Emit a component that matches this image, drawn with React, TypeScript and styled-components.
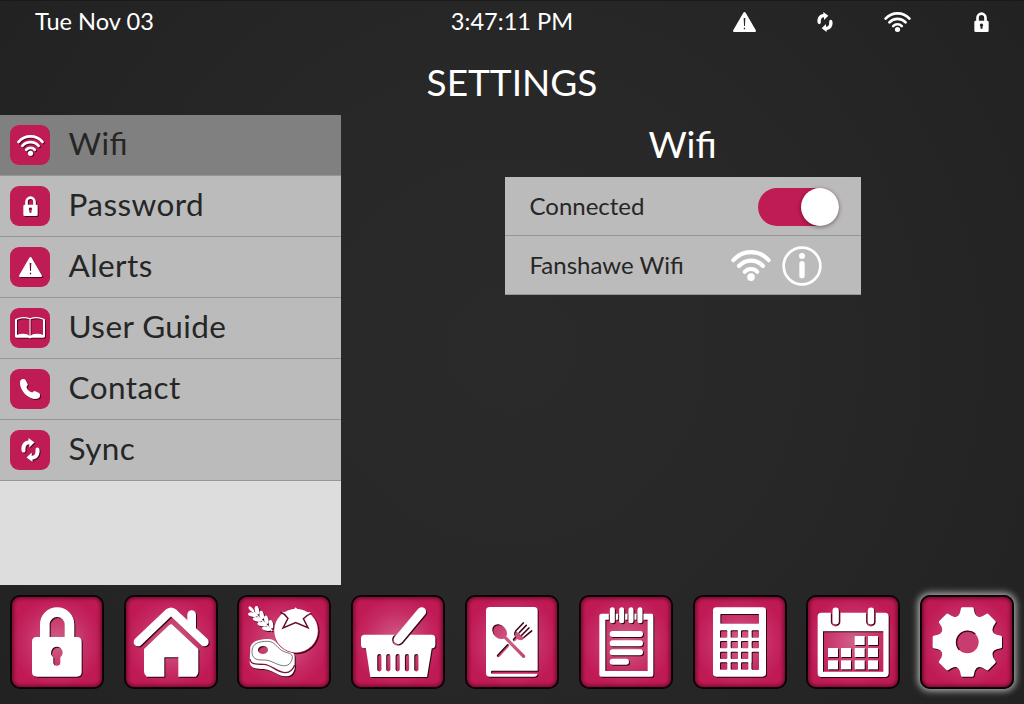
import React, { ReactNode } from "react";
import styled, { createGlobalStyle, css } from "styled-components";

const PINK = "#bf1b55";
const INK = "#262626";

const GlobalStyle = createGlobalStyle`
  * { box-sizing: border-box; }
  body {
    margin: 0;
    font-family: Lato, "Liberation Sans", sans-serif;
    background: #242424;
    overflow: hidden;
  }
`;

const Screen = styled.div`
  width: 1024px;
  height: 704px;
  display: flex;
  flex-direction: column;
  color: #fff;
  border-top: 1px solid #1a1a1a;
  background: radial-gradient(circle at 512px 350px, #2a2a2a 0, #282828 260px, #222 620px);
`;

const StatusBar = styled.header`
  height: 42px;
  flex: none;
  padding: 0 35px;
  display: grid;
  grid-template-columns: 1fr auto 1fr;
  align-items: center;
  font-size: 23.6px;
  line-height: 40px;
`;

const StatusText = styled.span`
  height: 42px;
`;

const StatusIcons = styled.div`
  justify-self: end;
  display: flex;
  align-items: center;
`;

const StatusIcon = styled.span<{ $gap: number }>`
  display: flex;
  margin-left: ${(p) => p.$gap}px;
`;

const PageTitle = styled.h1`
  height: 72px;
  flex: none;
  margin: 0;
  font-size: 37px;
  font-weight: 400;
  line-height: 78px;
  text-align: center;
`;

const Main = styled.main`
  display: flex;
  height: 470px;
  flex: none;
`;

const Sidebar = styled.aside`
  width: 341px;
  background: #ddd;
`;

const MenuRow = styled.div<{ $active?: boolean }>`
  height: 61px;
  padding-left: 10px;
  display: flex;
  align-items: center;
  gap: 18.5px;
  color: ${INK};
  background: ${(p) => (p.$active ? "#808080" : "#bbb")};
  border-bottom: 1px solid #969696;
`;

const MenuIcon = styled.span`
  width: 40px;
  height: 40px;
  display: flex;
  align-items: center;
  justify-content: center;
  border-radius: 9px;
  background: ${PINK};
  svg { filter: drop-shadow(1px 1px 0.3px rgba(50, 0, 20, 0.75)); }
`;

const MenuLabel = styled.span`
  font-size: 31.5px;
  letter-spacing: 0.42px;
  font-feature-settings: "liga" 1;
  line-height: 40px;
  padding-bottom: 4px;
`;

const Content = styled.section`
  flex: 1;
  display: flex;
  flex-direction: column;
  align-items: center;
`;

const PanelTitle = styled.h2`
  margin: 0;
  height: 62px;
  font-size: 37px;
  font-weight: 400;
  line-height: 58px;
`;

const Card = styled.div`
  width: 356px;
  color: ${INK};
  background: #bbb;
`;

const CardRow = styled.div<{ $end: number }>`
  height: 59px;
  padding: 0 ${(p) => p.$end}px 0 25px;
  display: flex;
  align-items: center;
  justify-content: space-between;
  font-size: 24px;
  border-bottom: 1px solid #969696;
`;

const CardLabel = styled.span`
  padding-bottom: 2px;
`;

const NetworkIcons = styled.span`
  display: flex;
  align-items: center;
  gap: 11px;
  padding-top: 1px;
`;

const Toggle = styled.span`
  width: 81px;
  height: 38px;
  margin-top: 2px;
  display: flex;
  justify-content: flex-end;
  border-radius: 19px;
  background: ${PINK};
`;

const Knob = styled.span`
  width: 38px;
  height: 38px;
  border-radius: 50%;
  background: #fff;
  box-shadow: 0 1px 4px rgba(0, 0, 0, 0.45);
`;

const Dock = styled.nav`
  flex: 1;
  padding-top: 10px;
  display: grid;
  grid-template-columns: repeat(9, 1fr);
  justify-items: center;
  align-items: start;
`;

const DockButton = styled.span<{ $active?: boolean }>`
  width: 94px;
  height: 94px;
  display: block;
  border-radius: 10px;
  border: 2px solid #0c0206;
  background: radial-gradient(circle at 50% 50%, #d0608a 0, #ca3e70 32%, #c52a63 50%, #c01a55 72%);
  box-shadow: inset 0 0 4px 1px rgba(60, 0, 20, 0.75)
    ${(p) => p.$active && css`, 0 0 7px 2px rgba(225, 225, 225, 0.75)`};
  svg {
    display: block;
    margin: -2px;
    filter: drop-shadow(1.6px 1.7px 0.6px rgba(30, 0, 10, 0.9));
  }
`;

type Size = { w: number; h: number };

const WifiGlyph = ({ w, h }: Size) => (
  <svg width={w} height={h} viewBox="0 0 120 91" preserveAspectRatio="none">
    <g fill="none" stroke="#fff" strokeWidth="12" strokeLinecap="round">
      <path d="M7 30A71 71 0 0 1 113 30" />
      <path d="M24 47A49 49 0 0 1 96 47" />
      <path d="M41 64A26 26 0 0 1 79 64" />
    </g>
    <circle cx="60" cy="79.500" r="11.500" fill="#fff" />
  </svg>
);

const LockGlyph = ({ w, h }: Size) => (
  <svg width={w} height={h} viewBox="0 0 43 60">
    <path d="M9.5 30V17a12 12 0 0 1 24 0V30" fill="none" stroke="#fff" strokeWidth="8" />
    <path
      fill="#fff"
      fillRule="evenodd"
      d="M4 26H39Q43 26 43 30V56Q43 60 39 60H4Q0 60 0 56V30Q0 26 4 26ZM21.500 34.500a5 5 0 0 0-3 9V50h6V43.500a5 5 0 0 0-3-9Z"
    />
  </svg>
);

const AlertGlyph = ({ w, h }: Size) => (
  <svg width={w} height={h} viewBox="0 0 69 60">
    <path
      fill="#fff"
      fillRule="evenodd"
      d="M31 2Q34.500-2 38 2L68 54Q71 60 65 60H4Q-2 60 1 54ZM32 18L33.200 42H35.800L37 18ZM32.500 47V51.500H36.500V47Z"
    />
  </svg>
);

const SyncHalf = () => (
  <path d="M.5 31C-1 17 6 7 18 6V0L33 11.500L20 24V15.500C13 15.500 9.500 21 10.500 31Q10.500 36.500 6 36.500Q1 36.500 .5 31Z" />
);

const SyncGlyph = ({ w, h }: Size) => (
  <svg width={w} height={h} viewBox="0 0 46 60">
    <g fill="#fff">
      <SyncHalf />
      <g transform="rotate(180 23 30)">
        <SyncHalf />
      </g>
    </g>
  </svg>
);

const BookGlyph = () => (
  <svg width="30" height="22" viewBox="0 0 90 66">
    <path
      fill="#fff"
      fillRule="evenodd"
      d="M3 5Q25-4 45 4Q65-4 87 5Q90 6 90 9V58Q90 62 86 62H50Q45 65 40 62H4Q0 62 0 58V9Q0 6 3 5ZM6 8V54Q12 50 25 50Q38 50 43.500 56V7Q27 0 6 8ZM46.500 7V56Q52 50 65 50Q78 50 84 54V8Q63 0 46.500 7Z"
    />
  </svg>
);

const PhoneGlyph = () => (
  <svg width="20" height="20" viewBox="0 0 60 60">
    <path
      fill="#fff"
      d="M5 1C9-1 14-1 17 4L23 15C25 20 18 22 20 26C23 34 29 38 35 40C39 41 39 36 44 36L56 41C61 43 61 50 59 54C56 60 47 61 39 59C20 54 6 38 1 20C-1 11 0 4 5 1Z"
    />
  </svg>
);

const InfoGlyph = () => (
  <svg width="40" height="40" viewBox="0 0 120 120">
    <circle cx="60" cy="60" r="55" fill="none" stroke="#fff" strokeWidth="8" />
    <circle cx="60" cy="30" r="9" fill="#fff" />
    <path d="M60 53V89" stroke="#fff" strokeWidth="16" strokeLinecap="round" />
  </svg>
);

const DockSvg = ({ children }: { children: ReactNode }) => (
  <svg width="94" height="94" viewBox="0 0 282 282" fill="#fff">
    {children}
  </svg>
);

const DockLock = () => (
  <DockSvg>
    <path d="M104.500 135V88.500a37 37 0 0 1 74 0V135" fill="none" stroke="#fff" strokeWidth="29" />
    <path
      fillRule="evenodd"
      d="M80 126H201Q215 126 215 140V231Q215 245 201 245H80Q66 245 66 231V140Q66 126 80 126ZM141 155a18 18 0 0 0-11 32V202a10.500 10.500 0 0 0 21 0V187a18 18 0 0 0-10-32Z"
    />
  </DockSvg>
);

const DockHouse = () => (
  <DockSvg>
    <path
      d="M42 141L132 55Q141 47 150 55L241 141"
      fill="none"
      stroke="#fff"
      strokeWidth="26"
      strokeLinecap="round"
    />
    <path d="M203 59V102" stroke="#fff" strokeWidth="26" strokeLinecap="round" />
    <path d="M135 91Q141 85 147 91L223 162V230Q223 238 216 245H163V187H121V245H68Q60 238 60 230V162Z" />
  </DockSvg>
);

const GRAINS = [0, 1, 2, 3];

const DockFood = () => (
  <DockSvg>
    <path d="M38 38L106 108" stroke="#fff" strokeWidth="4" />
    {GRAINS.map((i) => (
      <g key={i} transform={`translate(${54 + i * 14} ${53 + i * 14})`}>
        <ellipse cx="6" cy="-7" rx="13" ry="6.500" transform="rotate(78 6 -7)" />
        <ellipse cx="-7" cy="6" rx="14" ry="6.500" transform="rotate(10 -7 6)" />
      </g>
    ))}
    <ellipse cx="43" cy="43" rx="11" ry="5" transform="rotate(45 43 43)" />
    <path
      fillRule="evenodd"
      d="M40 156C45 138 68 132 94 132C116 132 124 152 140 162C154 170 174 167 173 185V222C166 248 145 247 125 239C105 230 96 222 72 222C50 222 38 214 38 200ZM78 153a15 12 0 1 0 .1 0Z"
    />
    <path
      d="M39 192C40 208 55 208 80 208C106 209 118 233 146 233C162 232 168 223 173 210"
      fill="none"
      stroke="#7d1239"
      strokeWidth="4"
    />
    <path
      d="M45 170C45 145 65 139 92 139C113 139 119 157 135 167C150 175 168 173 166 189C162 212 145 216 125 209C106 202 98 194 75 195C57 195 45 190 45 170Z"
      fill="none"
      stroke="#333"
      strokeWidth="2"
    />
    <circle cx="177" cy="107" r="67.500" fill="#c3235c" />
    <circle cx="177" cy="107" r="65.500" />
    <path d="M133 50L162 53L176 37L191 54L222 51L199 72L213 98L176 83L139 99L153 70Z" />
    <path
      d="M130 51Q143 56 153 70L138 99L176 83L213 98L199 71Q207 62 221 56"
      fill="none"
      stroke="#641030"
      strokeWidth="4.500"
    />
  </DockSvg>
);

const DockBasket = () => (
  <DockSvg>
    <mask id="basket-cut">
      <rect width="282" height="282" fill="#fff" />
      <path d="M142 134L212 50" stroke="#000" strokeWidth="37" strokeLinecap="round" />
      {[85, 112, 140, 168, 196].map((x) => (
        <path key={x} d={`M${x} 183V223`} stroke="#000" strokeWidth="12.500" strokeLinecap="round" />
      ))}
    </mask>
    <g mask="url(#basket-cut)">
      <rect x="30" y="119" width="223" height="41" rx="11" />
      <path d="M44 155L58 246H228L243 155Z" />
    </g>
    <path d="M142 134L212 50" stroke="#fff" strokeWidth="27" strokeLinecap="round" />
  </DockSvg>
);

const DockRecipes = () => (
  <DockSvg>
    <mask id="recipe-cut">
      <rect width="282" height="282" fill="#fff" />
      <path d="M80 227H225V236H80Q75 231 80 227Z" fill="#000" />
      <ellipse cx="104" cy="110" rx="19" ry="25" transform="rotate(-45 104 110)" fill="#000" />
      <g fill="none" stroke="#000" strokeLinecap="round">
        <path d="M112 119L176 184" strokeWidth="9" />
        <path d="M100 182L128 152" strokeWidth="9" />
        <path d="M148 134L160 122" strokeWidth="9" />
        <path
          d="M175 84L153 107Q145 119 158 130Q168 137 177 127L200 108M184 91L163 113M192 99L170 121"
          strokeWidth="5"
        />
      </g>
      <path d="M152 108L177 128Q166 138 156 130Q146 120 152 108Z" fill="#000" />
    </mask>
    <rect x="63" y="36" width="155" height="209" rx="11" mask="url(#recipe-cut)" />
  </DockSvg>
);

const DockNotes = () => (
  <DockSvg>
    <mask id="notes-cut">
      <rect width="282" height="282" fill="#fff" />
      {[100, 128, 156, 183].map((x) => (
        <path key={x} d={`M${x} 44V78`} stroke="#000" strokeWidth="21" strokeLinecap="round" />
      ))}
    </mask>
    <path
      mask="url(#notes-cut)"
      fillRule="evenodd"
      d="M67 56H217Q223 56 223 62V239Q223 245 217 245H67Q61 245 61 239V62Q61 56 67 56ZM79 74V228H206V74Z"
    />
    <g stroke="#fff" strokeLinecap="round">
      {[100, 128, 156, 183].map((x) => (
        <path key={x} d={`M${x} 44V77`} strokeWidth="15" />
      ))}
      <path d="M101 117H183M101 145H183M101 172H183M101 200H141" strokeWidth="18" />
    </g>
  </DockSvg>
);

const DockCalculator = () => (
  <DockSvg>
    <mask id="calc-cut">
      <rect width="282" height="282" fill="#fff" />
      <g fill="#000">
        <rect x="82" y="57" width="116" height="29" rx="2" />
        {[106, 138, 170, 202].map((y) =>
          [81, 113, 144, 176].map((x) => (
            <rect
              key={`${x}-${y}`}
              x={x}
              y={y}
              width="22"
              height={x === 176 && y === 170 ? 54 : 22}
              rx="3"
            />
          ))
        )}
      </g>
    </mask>
    <rect x="60" y="37" width="159" height="208" rx="10" mask="url(#calc-cut)" />
  </DockSvg>
);

const DAY_CELLS = [
  [146, 123], [186, 123],
  [66, 159], [105, 159], [146, 159], [186, 159],
  [66, 196], [105, 196], [146, 196], [186, 196],
];

const DockCalendar = () => (
  <DockSvg>
    <mask id="calendar-cut">
      <rect width="282" height="282" fill="#fff" />
      <path d="M89 47V80M195 47V80" stroke="#000" strokeWidth="29" strokeLinecap="round" />
    </mask>
    <path
      mask="url(#calendar-cut)"
      fillRule="evenodd"
      d="M46 53H237Q248 53 248 64V235Q248 246 237 246H46Q35 246 35 235V64Q35 53 46 53ZM51 109V230H232V109Z"
    />
    <path d="M89 47V79M195 47V79" stroke="#fff" strokeWidth="19" strokeLinecap="round" />
    {DAY_CELLS.map(([x, y]) => (
      <rect key={`${x}-${y}`} x={x} y={y} width="30" height="27" />
    ))}
  </DockSvg>
);

const TEETH = [0, 45, 90, 135, 180, 225, 270, 315];

const DockGear = () => (
  <DockSvg>
    <g transform="translate(142 141)">
      {TEETH.map((a) => (
        <path
          key={a}
          transform={`rotate(${a})`}
          d="M0-30V-104H15Q18-104 19-101L22-88Q27-70 45.300-76.400L22-20Z M0-30V-104H-15Q-18-104-19-101L-22-88Q-27-70-45.300-76.400L-22-20Z"
        />
      ))}
      <circle r="54" fill="none" stroke="#fff" strokeWidth="41" />
      <circle r="34" fill="#c93c70" />
      <path d="M-24 24A34 34 0 0 1 24-24" fill="none" stroke="#3b0a1d" strokeWidth="4" />
    </g>
  </DockSvg>
);

const MENU = [
  { label: "Wifi", icon: <WifiGlyph w={27} h={21} /> },
  { label: "Password", icon: <LockGlyph w={15} h={20} /> },
  { label: "Alerts", icon: <AlertGlyph w={23} h={20} /> },
  { label: "User Guide", icon: <BookGlyph /> },
  { label: "Contact", icon: <PhoneGlyph /> },
  { label: "Sync", icon: <SyncGlyph w={19} h={24} /> },
];

const DOCK = [
  DockLock,
  DockHouse,
  DockFood,
  DockBasket,
  DockRecipes,
  DockNotes,
  DockCalculator,
  DockCalendar,
  DockGear,
];

export default function App() {
  return (
    <>
      <GlobalStyle />
      <Screen>
        <StatusBar>
          <StatusText>Tue Nov 03</StatusText>
          <StatusText>3:47:11 PM</StatusText>
          <StatusIcons>
            <StatusIcon $gap={0}><AlertGlyph w={23} h={20} /></StatusIcon>
            <StatusIcon $gap={61}><SyncGlyph w={16} h={20} /></StatusIcon>
            <StatusIcon $gap={51}><WifiGlyph w={27} h={20} /></StatusIcon>
            <StatusIcon $gap={63}><LockGlyph w={15} h={20} /></StatusIcon>
          </StatusIcons>
        </StatusBar>
        <PageTitle>SETTINGS</PageTitle>
        <Main>
          <Sidebar>
            {MENU.map((item, i) => (
              <MenuRow key={item.label} $active={i === 0}>
                <MenuIcon>{item.icon}</MenuIcon>
                <MenuLabel>{item.label}</MenuLabel>
              </MenuRow>
            ))}
          </Sidebar>
          <Content>
            <PanelTitle>Wifi</PanelTitle>
            <Card>
              <CardRow $end={22}>
                <CardLabel>Connected</CardLabel>
                <Toggle><Knob /></Toggle>
              </CardRow>
              <CardRow $end={39}>
                <CardLabel>Fanshawe Wifi</CardLabel>
                <NetworkIcons>
                  <WifiGlyph w={40} h={31} />
                  <InfoGlyph />
                </NetworkIcons>
              </CardRow>
            </Card>
          </Content>
        </Main>
        <Dock>
          {DOCK.map((Icon, i) => (
            <DockButton key={i} $active={i === DOCK.length - 1}>
              <Icon />
            </DockButton>
          ))}
        </Dock>
      </Screen>
    </>
  );
}
